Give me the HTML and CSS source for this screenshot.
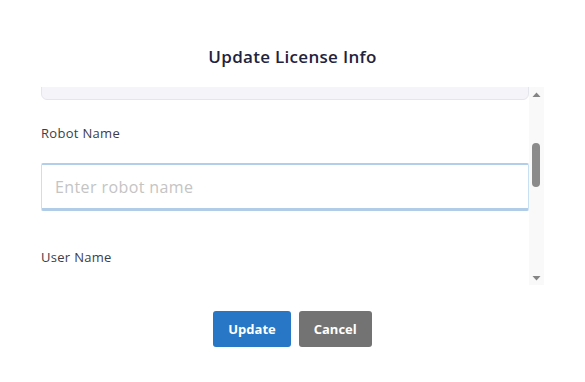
FILE: index.html
```html
<!DOCTYPE html>
<html lang="en">
<head>
  <meta charset="UTF-8" />
  <meta name="viewport" content="width=device-width, initial-scale=1.0"/>
  <title>Update License Info</title>
  <link rel="stylesheet" href="styles.css">
</head>
<body>
  <div class="modal">
    <h2 class="modal-title">Update License Info</h2>

    <div class="scroll-area">
      <div class="modal-body" id="modalBody">
        <div class="field field-first">
          <div class="readonly-box"></div>
        </div>
        <div class="field">
          <label for="robotName">Robot Name</label>
          <input type="text" id="robotName" class="focused" placeholder="Enter robot name" />
        </div>
        <div class="field">
          <label for="userName">User Name</label>
          <input type="text" id="userName" placeholder="Enter user name" />
        </div>
      </div>

      <div class="scrollbar">
        <span class="scroll-btn">
          <svg width="9" height="6" viewBox="0 0 9 6"><polygon points="4.5,0.5 8.5,5 0.5,5" fill="#858585"/></svg>
        </span>
        <div class="scroll-track">
          <div class="scroll-thumb"></div>
        </div>
        <span class="scroll-btn">
          <svg width="9" height="6" viewBox="0 0 9 6"><polygon points="0.5,1 8.5,1 4.5,5.5" fill="#858585"/></svg>
        </span>
      </div>
    </div>

    <div class="modal-footer">
      <button class="btn btn-primary">Update</button>
      <button class="btn btn-secondary">Cancel</button>
    </div>
  </div>

  <script>
    // keep the form scrolled to the robot name field
    document.getElementById("modalBody").scrollTop = 99;
  </script>
</body>
</html>
```

FILE: styles.css
```css
body {
  margin: 0;
  font-family: "Open Sans", sans-serif;
  background: #fff;
}

.modal {
  width: 585px;
  height: 382px;
  padding-top: 45px;
  box-sizing: border-box;
}

.modal-title {
  margin: 0;
  text-align: center;
  font-size: 17px;
  font-weight: 600;
  line-height: 24px;
  letter-spacing: 0.3px;
  color: #1f2240;
}

.scroll-area {
  display: flex;
  margin: 18px 41px 0;
  height: 198px;
}

.modal-body {
  flex: 1;
  overflow: hidden;
  padding-top: 16px;
  box-sizing: border-box;
}

.scrollbar {
  width: 15px;
  display: flex;
  flex-direction: column;
  background: #f9f9f9;
}

.scroll-btn {
  height: 15px;
  display: flex;
  align-items: center;
  justify-content: center;
}

.scroll-btn svg {
  display: block;
}

.scroll-track {
  flex: 1;
}

.scroll-thumb {
  width: 8px;
  height: 44px;
  margin: 41px 0 0 3px;
  background: #8b8b8b;
  border-radius: 4px;
}

.field {
  display: flex;
  flex-direction: column;
  gap: 20px;
  margin-bottom: 36px;
}

.field-first {
  margin-bottom: 23px;
}

.field label {
  font-size: 13px;
  line-height: 20px;
  letter-spacing: 0.3px;
  color: #3d3d4a;
}

.readonly-box {
  height: 96px;
  background: #f5f5f9;
  border: 1px solid #e4e6ec;
  border-radius: 6px;
  box-sizing: border-box;
}

.field input {
  height: 48px;
  box-sizing: border-box;
  padding: 0 13px;
  font-family: inherit;
  font-size: 16px;
  letter-spacing: 0.4px;
  color: #333;
  border: 1px solid #d6d8de;
  border-radius: 2px;
  outline: none;
}

.field input.focused {
  border-color: #c8e0f2;
  border-top: 2px solid #b3cee8;
  border-bottom: 3px solid #b0cce6;
}

.field input::placeholder {
  color: #c4c4c4;
}

.modal-footer {
  display: flex;
  justify-content: center;
  gap: 8px;
  margin-top: 26px;
}

.btn {
  height: 36px;
  padding: 0 15px;
  border: none;
  border-radius: 3px;
  font-family: inherit;
  font-size: 13px;
  font-weight: 700;
  color: #fff;
  cursor: pointer;
}

.btn-primary {
  background: #2777c6;
}

.btn-secondary {
  background: #737373;
}
```
